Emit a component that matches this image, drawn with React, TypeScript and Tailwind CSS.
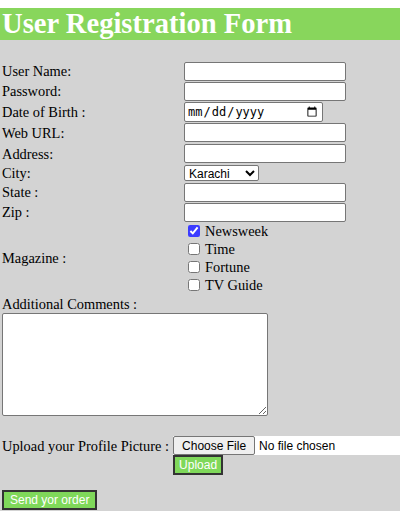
const field =
  "h-[19px] w-[162px] rounded-[2px] border border-[#767676] bg-white px-[2px] font-['Liberation_Sans',sans-serif] text-[12px]";

const btn =
  "h-[20px] border-2 border-[#333] bg-[#7fd85a] font-['Liberation_Sans',sans-serif] text-[12px] leading-[14px] text-white";

const Row = ({ label, h, children }: { label: string; h: string; children: React.ReactNode }) => (
  <div className={`flex items-center ${h}`}>
    <div className="w-[184px] shrink-0 pl-[2px]">{label}</div>
    {children}
  </div>
);

const magazines = [
  { name: "Newsweek", checked: true },
  { name: "Time", checked: false },
  { name: "Fortune", checked: false },
  { name: "TV Guide", checked: false },
];

export default function App() {
  return (
    <div className="min-h-[511px] w-[400px] overflow-hidden bg-[#d3d3d3] font-['Liberation_Serif',serif] text-[14.4px] leading-[18px] text-black">
      <div className="h-2 bg-white" />
      <h1 className="h-8 bg-[#88d65c] pl-[2px] text-[28.6px] font-bold leading-8 text-white">
        User Registration Form
      </h1>

      <form className="pt-[21px]" onSubmit={(e) => e.preventDefault()}>
        <Row label="User Name:" h="h-[20px]">
          <input type="text" className={field} />
        </Row>
        <Row label="Password:" h="h-[20px]">
          <input type="password" className={field} />
        </Row>
        <Row label="Date of Birth :" h="h-[21px]">
          <input
            type="date"
            className="h-[20px] w-[139px] rounded-[2px] border border-[#767676] bg-white px-[2px] font-['DejaVu_Sans_Mono',monospace] text-[12px]"
          />
        </Row>
        <Row label="Web URL:" h="h-[21px]">
          <input type="text" className={field} />
        </Row>
        <Row label="Address:" h="h-[21px]">
          <input type="text" className={field} />
        </Row>
        <Row label="City:" h="h-[18px]">
          <select className="h-[16px] w-[75px] rounded-[2px] border border-[#767676] bg-white font-['Liberation_Sans',sans-serif] text-[12px] leading-[14px]">
            <option>Karachi</option>
            <option>Lahore</option>
            <option>Islamabad</option>
          </select>
        </Row>
        <Row label="State :" h="h-[20px]">
          <input type="text" className={field} />
        </Row>
        <Row label="Zip :" h="h-[20px]">
          <input type="text" className={field} />
        </Row>

        {/* Magazine checkboxes */}
        <div className="flex items-center">
          <div className="w-[184px] shrink-0 pl-[2px]">Magazine :</div>
          <div className="flex flex-col">
            {magazines.map((m) => (
              <label key={m.name} className="flex h-[18px] items-center">
                <input
                  type="checkbox"
                  defaultChecked={m.checked}
                  className="mt-[3px] mr-[5px] mb-[3px] ml-[4px] h-[12px] w-[12px] accent-[#3b3bff]"
                />
                {m.name}
              </label>
            ))}
          </div>
        </div>

        <div className="flex h-[19px] items-center pl-[2px]">Additional Comments :</div>
        <textarea className="ml-[2px] block h-[103px] w-[266px] rounded-[2px] border border-[#767676] bg-white" />

        {/* Upload */}
        <div className="mt-[20px] flex items-start">
          <div className="flex h-[19px] shrink-0 items-center pl-[2px]">Upload your Profile Picture :</div>
          <div className="ml-[4px] flex min-w-0 flex-1 flex-col items-start">
            <input
              type="file"
              className="h-[19px] w-full bg-white font-['Liberation_Sans',sans-serif] text-[12px] file:mr-[4px] file:h-[19px] file:rounded-[2px] file:border file:border-[#767676] file:bg-[#efefef] file:px-[8px] file:text-black"
            />
            <button type="button" className={`px-[4px] ${btn}`}>
              Upload
            </button>
          </div>
        </div>

        <button type="submit" className={`mt-[15px] ml-[2px] px-[6px] ${btn}`}>
          Send yor order
        </button>
      </form>
    </div>
  );
}
